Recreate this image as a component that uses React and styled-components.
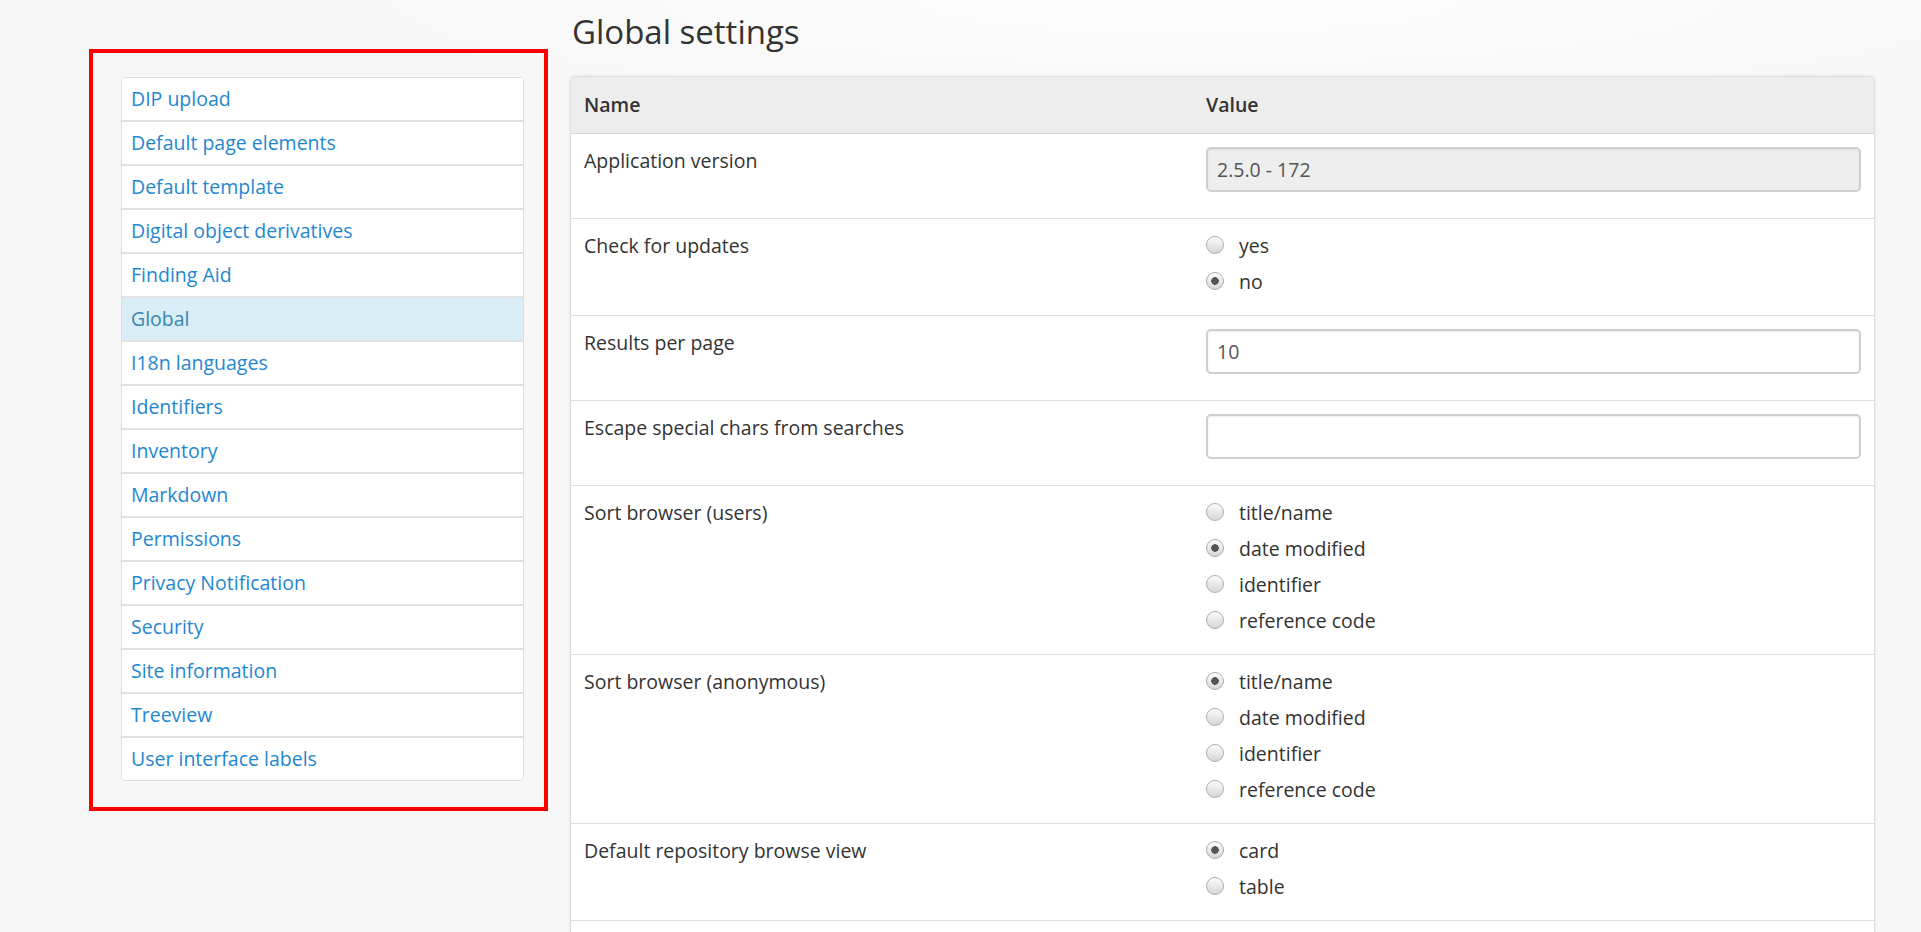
import React from "react";
import styled, { createGlobalStyle } from "styled-components";

const GlobalStyle = createGlobalStyle`
  html, body {
    margin: 0;
    padding: 0;
  }
  body {
    background: radial-gradient(ellipse 900px 110px at 62% 0, #fdfdfd 0%, #f7f7f7 100%) no-repeat, #f7f7f7;
    font-family: "Open Sans", "Liberation Sans", Arial, sans-serif;
    color: #333;
  }
`;

const menu = [
  "DIP upload",
  "Default page elements",
  "Default template",
  "Digital object derivatives",
  "Finding Aid",
  "Global",
  "I18n languages",
  "Identifiers",
  "Inventory",
  "Markdown",
  "Permissions",
  "Privacy Notification",
  "Security",
  "Site information",
  "Treeview",
  "User interface labels",
];

const settings = [
  { label: "Application version", kind: "text", value: "2.5.0 - 172", disabled: true },
  { label: "Check for updates", kind: "radio", options: ["yes", "no"], checked: 1 },
  { label: "Results per page", kind: "text", value: "10" },
  { label: "Escape special chars from searches", kind: "text", value: "" },
  {
    label: "Sort browser (users)",
    kind: "radio",
    options: ["title/name", "date modified", "identifier", "reference code"],
    checked: 1,
  },
  {
    label: "Sort browser (anonymous)",
    kind: "radio",
    options: ["title/name", "date modified", "identifier", "reference code"],
    checked: 0,
  },
  { label: "Default repository browse view", kind: "radio", options: ["card", "table"], checked: 0 },
  { label: "Default archival description browse view", kind: "radio", options: ["card", "table"], checked: 1 },
];

const Page = styled.div`
  display: flex;
  align-items: flex-start;
  padding-left: 89px;
  min-height: 932px;
  box-sizing: border-box;
`;

const Sidebar = styled.aside`
  width: 459px;
  margin-top: 49px;
  box-sizing: border-box;
  border: 4px solid #ff0000;
  padding: 24px 20px 26px 28px;
`;

const NavList = styled.ul`
  list-style: none;
  margin: 0;
  padding: 0;
  background: #fff;
  border: 1px solid #dcdcdc;
  border-radius: 4px;
  overflow: hidden;
`;

const NavItem = styled.li`
  & + & {
    border-top: 2px solid #e2e2e2;
  }
`;

const NavLink = styled.a`
  display: block;
  padding: 8px 9px;
  font-size: 19.5px;
  line-height: 26px;
  text-decoration: none;
  color: ${(p) => (p.$active ? "#3a87ad" : "#1f87d0")};
  background: ${(p) => (p.$active ? "#d9edf7" : "#fff")};
`;

const Main = styled.main`
  width: 1303px;
  margin-left: 23px;
`;

const Title = styled.h1`
  margin: 10px 0 23px 1px;
  font-size: 33px;
  line-height: 44px;
  font-weight: 400;
  color: #333;
`;

const Panel = styled.div`
  background: #fff;
  border-radius: 4px;
  box-shadow: 0 0 3px rgba(0, 0, 0, 0.28);
  overflow: hidden;
`;

const Table = styled.table`
  width: 100%;
  border-collapse: collapse;
  table-layout: fixed;
  font-size: 19.5px;
  line-height: 27px;
`;

const HeadCell = styled.th`
  height: 56px;
  padding: 0 13px;
  text-align: left;
  font-weight: 600;
  background: #ededed;
  border-bottom: 1px solid #d6d6d6;
  box-sizing: border-box;
`;

const Cell = styled.td`
  padding: 13px 13px 11px;
  vertical-align: top;
  border-top: 1px solid #dedede;
`;

const TextInput = styled.input`
  display: block;
  width: 100%;
  height: 45px;
  box-sizing: border-box;
  margin: 0 0 15px;
  padding: 0 9px;
  border: 2px solid #cfcfcf;
  border-radius: 5px;
  box-shadow: inset 0 1px 2px rgba(0, 0, 0, 0.08);
  background: ${(p) => (p.disabled ? "#eeeeee" : "#fff")};
  color: #555;
  font-family: inherit;
  font-size: 19.5px;
  outline: none;
`;

const RadioLabel = styled.label`
  display: flex;
  align-items: center;
  gap: 15px;
  height: 27px;
  margin-bottom: 9px;
  color: #333;
`;

const RadioDot = styled.span`
  width: 18px;
  height: 18px;
  flex: none;
  box-sizing: border-box;
  border-radius: 50%;
  border: 1px solid #adadad;
  background: ${(p) =>
    p.$checked
      ? "radial-gradient(circle, #555 0, #555 3.5px, transparent 4px), linear-gradient(#fbfbfb, #d6d6d6)"
      : "linear-gradient(#fbfbfb, #d6d6d6)"};
  box-shadow: inset 0 1px 1px rgba(255, 255, 255, 0.8);
`;

const RadioGroup = ({ options, checked }) => (
  <div>
    {options.map((opt, i) => (
      <RadioLabel key={opt}>
        <RadioDot $checked={i === checked} />
        {opt}
      </RadioLabel>
    ))}
  </div>
);

export default function App() {
  return (
    <>
      <GlobalStyle />
      <Page>
        <Sidebar>
          <NavList>
            {menu.map((item) => (
              <NavItem key={item}>
                <NavLink href="#" $active={item === "Global"}>
                  {item}
                </NavLink>
              </NavItem>
            ))}
          </NavList>
        </Sidebar>
        <Main>
          <Title>Global settings</Title>
          <Panel>
            <Table>
              <colgroup>
                <col style={{ width: 622 }} />
                <col />
              </colgroup>
              <thead>
                <tr>
                  <HeadCell>Name</HeadCell>
                  <HeadCell>Value</HeadCell>
                </tr>
              </thead>
              <tbody>
                {settings.map((s) => (
                  <tr key={s.label}>
                    <Cell>{s.label}</Cell>
                    <Cell>
                      {s.kind === "text" ? (
                        <TextInput defaultValue={s.value} disabled={s.disabled} readOnly />
                      ) : (
                        <RadioGroup options={s.options} checked={s.checked} />
                      )}
                    </Cell>
                  </tr>
                ))}
              </tbody>
            </Table>
          </Panel>
        </Main>
      </Page>
    </>
  );
}
